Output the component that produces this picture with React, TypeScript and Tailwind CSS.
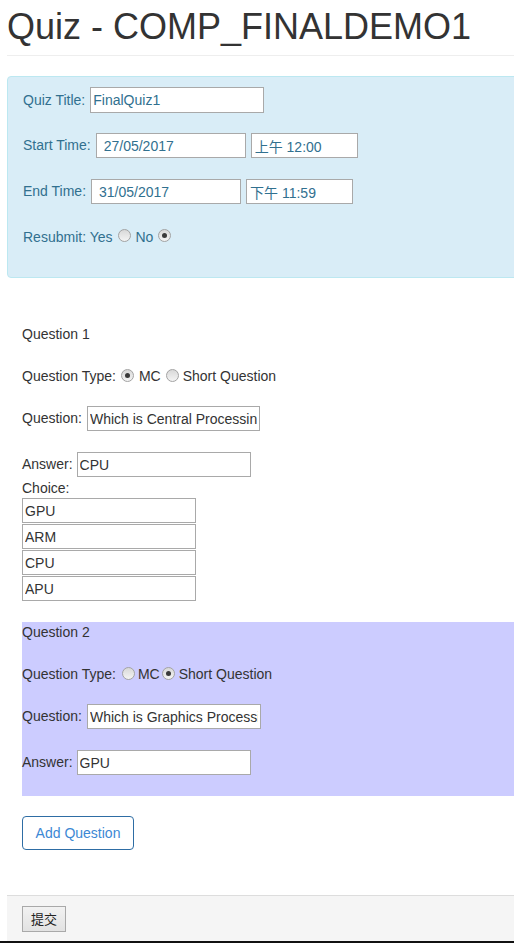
import React from "react";

function Radio({ checked = false, className = "" }: { checked?: boolean; className?: string }) {
  return (
    <span
      className={`inline-flex h-[13px] w-[13px] shrink-0 items-center justify-center rounded-full border border-[#a3a3a3] bg-[linear-gradient(#d8d8d8,#f4f4f4)] ${className}`}
    >
      {checked && <span className="h-[5px] w-[5px] rounded-full bg-[#3a3a3a]" />}
    </span>
  );
}

function Field({ value, className = "" }: { value: string; className?: string }) {
  return (
    <input
      readOnly
      value={value}
      className={`h-[25px] border border-[#a9a9a9] bg-white px-[2px] outline-none ${className}`}
    />
  );
}

export default function App() {
  return (
    <div className="relative h-[943px] w-[514px] overflow-hidden bg-white font-['Liberation_Sans',Arial,'Noto_Sans_CJK_TC',sans-serif] text-[14px] text-[#333]">
      <div className="w-[560px] pl-[7px]">
        {/* Header */}
        <h1 className="pt-[7px] text-[36px] leading-[40px] font-normal text-[#333]">
          Quiz - COMP_FINALDEMO1
        </h1>
        <div className="mt-[8px] h-px bg-[#eee]" />

        {/* Quiz settings */}
        <div className="mt-[20px] rounded-[4px] border border-[#bce8f1] bg-[#d9edf7] pt-[10px] pb-[30px] pl-[15px] text-[#31708f]">
          <div className="flex items-center gap-[5px]">
            <span>Quiz Title:</span>
            <Field value="FinalQuiz1" className="h-[26px] w-[174px] text-[#31708f]" />
          </div>
          <div className="mt-[20px] flex items-center">
            <span>Start Time:</span>
            <Field value="27/05/2017" className="ml-[5px] w-[150px] pl-[7px] text-[#31708f]" />
            <Field value="上午 12:00" className="ml-[5px] w-[107px] pl-[3px] text-[#31708f]" />
          </div>
          <div className="mt-[21px] flex items-center">
            <span>End Time:</span>
            <Field value="31/05/2017" className="ml-[5px] w-[150px] pl-[7px] text-[#31708f]" />
            <Field value="下午 11:59" className="ml-[5px] w-[107px] pl-[3px] text-[#31708f]" />
          </div>
          <div className="mt-[23px] flex h-[20px] items-center">
            <span>Resubmit: Yes</span>
            <Radio className="ml-[5px] -mt-[3px]" />
            <span className="ml-[5px]">No</span>
            <Radio checked className="ml-[5px] -mt-[3px]" />
          </div>
        </div>

        {/* Questions */}
        <div className="pl-[15px]">
          <div className="mt-[46px] h-[20px] leading-[20px]">Question 1</div>
          <div className="mt-[22px] flex h-[20px] items-center">
            <span>Question Type:</span>
            <Radio checked className="ml-[5px] -mt-[2px]" />
            <span className="ml-[5px]">MC</span>
            <Radio className="ml-[5px] -mt-[2px]" />
            <span className="ml-[4px]">Short Question</span>
          </div>
          <div className="mt-[20px] flex items-center gap-[5px]">
            <span>Question:</span>
            <Field value="Which is Central Processing Unit?" className="w-[173px]" />
          </div>
          <div className="mt-[21px] flex items-center gap-[4px]">
            <span>Answer:</span>
            <Field value="CPU" className="w-[174px]" />
          </div>
          <div className="mt-px h-[20px] leading-[20px]">Choice:</div>
          <div className="flex flex-col gap-px">
            {["GPU", "ARM", "CPU", "APU"].map((c) => (
              <Field key={c} value={c} className="w-[174px]" />
            ))}
          </div>

          <div className="mt-[21px] bg-[#ccccff] pb-[21px]">
            <div className="h-[20px] leading-[20px]">Question 2</div>
            <div className="mt-[22px] flex h-[20px] items-center">
              <span>Question Type:</span>
              <Radio className="ml-[6px] -mt-[2px]" />
              <span className="ml-[3px]">MC</span>
              <Radio checked className="ml-[2px] -mt-[2px]" />
              <span className="ml-[4px]">Short Question</span>
            </div>
            <div className="mt-[20px] flex items-center gap-[5px]">
              <span>Question:</span>
              <Field value="Which is Graphics Processing Unit?" className="w-[174px]" />
            </div>
            <div className="mt-[21px] flex items-center gap-[4px]">
              <span>Answer:</span>
              <Field value="GPU" className="w-[174px]" />
            </div>
          </div>

          <button className="mt-[20px] h-[34px] w-[112px] rounded-[4px] border border-[#2e6da4] bg-white text-[14px] text-[#3c88d4]">
            Add Question
          </button>
        </div>

        {/* Footer */}
        <div className="mt-[45px] h-[46px] border-t border-[#ddd] bg-[#f5f5f5] pt-[10px] pl-[15px]">
          <button className="h-[26px] w-[44px] border border-[#a9a9a9] bg-[linear-gradient(#f2f2f2,#e2e2e2)] font-['Noto_Sans_CJK_TC',sans-serif] text-[13px] leading-[24px] text-[#222]">
            提交
          </button>
        </div>
      </div>
      <div className="h-[2px] w-full bg-[#111]" />
    </div>
  );
}
